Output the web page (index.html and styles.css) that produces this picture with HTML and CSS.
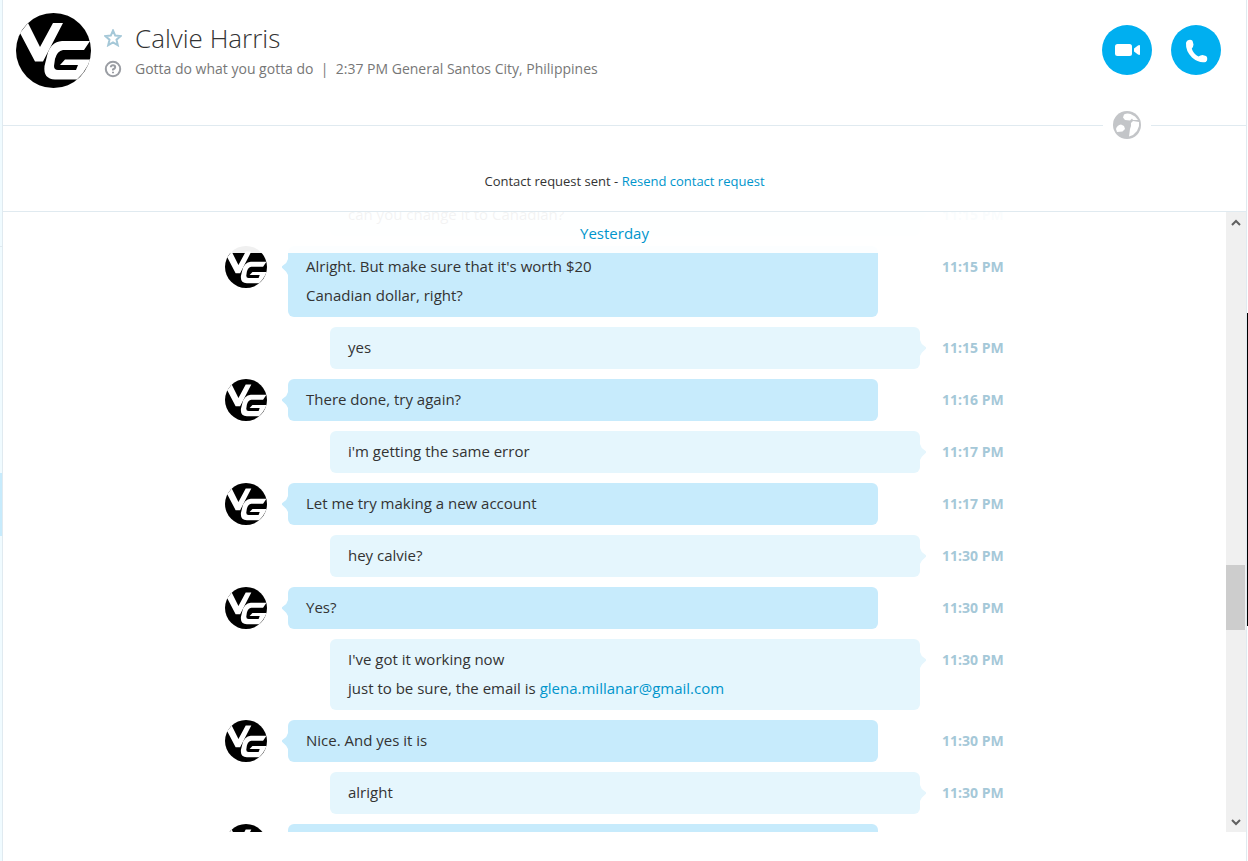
FILE: index.html
```html
<!DOCTYPE html>
<html lang="en">
<head>
  <meta charset="UTF-8">
  <meta name="viewport" content="width=device-width, initial-scale=1.0">
  <title>Calvie Harris</title>
  <link rel="stylesheet" href="styles.css">
</head>
<body>
  <svg class="sprite" aria-hidden="true">
    <symbol id="avatar" viewBox="0 0 75 75">
      <circle cx="37.500" cy="37.500" r="37.500" fill="#000"/>
      <path fill="#fff" d="M4 20 12 10 24 34 37 10H47L27 48.500H19Z"/>
      <path fill="#fff" d="M74 28 68 37H47Q41 38 39 46L38 53Q38 57 42 57H60L62 52H44L49 46.500H74L72 52 67 60 61 66.500H39Q27 66 28.500 53L31 43Q34 29 46 28Z"/>
    </symbol>
  </svg>

  <div class="app">
    <aside class="sidebar-edge">
      <div class="above"></div>
      <div class="selected"></div>
    </aside>

    <main class="conversation">
      <header class="contact">
        <svg class="avatar-large" role="img" aria-label="Calvie Harris"><use href="#avatar"/></svg>
        <div class="contact-info">
          <div class="info-row">
            <svg class="info-icon star" viewBox="0 0 18 18"><path d="M9 1.500 11.200 6.600 16.700 7.100 12.500 10.700 13.800 16.200 9 13.300 4.200 16.200 5.500 10.700 1.300 7.100 6.800 6.600Z"/></svg>
            <h1>Calvie Harris</h1>
          </div>
          <div class="info-row">
            <svg class="info-icon status" viewBox="0 0 18 18"><circle cx="9" cy="9" r="7.200"/><path d="M6.800 7.300Q6.900 5.300 9 5.300T11.200 7.200Q11.200 8.300 9 9.500V10.500M9 11.700V13.200"/></svg>
            <p class="mood">Gotta do what you gotta do &nbsp;|&nbsp; 2:37 PM General Santos City, Philippines</p>
          </div>
        </div>
        <div class="call-buttons">
          <button aria-label="Video call">
            <svg viewBox="0 0 50 50"><rect x="13" y="19" width="17" height="12" rx="2.500"/><path d="M32 23.500 36 20.500Q38 19.500 38 21V29Q38 30.500 36 29.500L32 26.500Z"/></svg>
          </button>
          <button aria-label="Call">
            <svg viewBox="0 0 50 50"><path d="M16.500 15.500Q19.500 14 21.500 15.800L22.500 19.500Q22.500 21.500 20.800 23.500Q22 28.500 27.500 31.500Q29.500 30 31.500 30L35 31Q36.800 32 36 35.500L34.800 37Q28 38.500 21 32.500Q14.500 26 15 18Q15.200 16.500 16.500 15.500Z"/></svg>
          </button>
        </div>
      </header>

      <div class="divider">
        <svg viewBox="0 0 28 28">
          <circle cx="14" cy="14" r="14"/>
          <path d="M11 3.500Q14 2 17.500 3L22 5.500 25 9H20L19 7.500 17 9.500 12 9 10 6.500Z"/>
          <path d="M3 18Q4 14 8 13.500L11 15 12 18 9.500 20.500 4 21Z"/>
          <path d="M18 12 20 10 26 11 26 15 24 20 20 24 16 25.500 17 18 18 15Z"/>
        </svg>
      </div>

      <p class="notice">Contact request sent - <a href="#">Resend contact request</a></p>

      <section class="history">
        <div class="scroll-area">
          <div class="day"><a href="#">Yesterday</a></div>
          <ol class="messages">
            <li class="message sent">
              <p class="bubble">can you change it to Canadian?</p>
              <time>11:15 PM</time>
            </li>
            <li class="message">
              <svg class="avatar"><use href="#avatar"/></svg>
              <p class="bubble">Alright. But make sure that it's worth $20<br>Canadian dollar, right?</p>
              <time>11:15 PM</time>
            </li>
            <li class="message sent">
              <p class="bubble">yes</p>
              <time>11:15 PM</time>
            </li>
            <li class="message">
              <svg class="avatar"><use href="#avatar"/></svg>
              <p class="bubble">There done, try again?</p>
              <time>11:16 PM</time>
            </li>
            <li class="message sent">
              <p class="bubble">i'm getting the same error</p>
              <time>11:17 PM</time>
            </li>
            <li class="message">
              <svg class="avatar"><use href="#avatar"/></svg>
              <p class="bubble">Let me try making a new account</p>
              <time>11:17 PM</time>
            </li>
            <li class="message sent">
              <p class="bubble">hey calvie?</p>
              <time>11:30 PM</time>
            </li>
            <li class="message">
              <svg class="avatar"><use href="#avatar"/></svg>
              <p class="bubble">Yes?</p>
              <time>11:30 PM</time>
            </li>
            <li class="message sent">
              <p class="bubble">I've got it working now<br>just to be sure, the email is <a href="mailto:glena.millanar@gmail.com">glena.millanar@gmail.com</a></p>
              <time>11:30 PM</time>
            </li>
            <li class="message">
              <svg class="avatar"><use href="#avatar"/></svg>
              <p class="bubble">Nice. And yes it is</p>
              <time>11:30 PM</time>
            </li>
            <li class="message sent">
              <p class="bubble">alright</p>
              <time>11:30 PM</time>
            </li>
            <li class="message">
              <svg class="avatar"><use href="#avatar"/></svg>
              <p class="bubble"></p>
            </li>
          </ol>
        </div>
        <div class="scrollbar">
          <button aria-label="Scroll up"><svg viewBox="0 0 10 8"><path d="M1 6 5 2 9 6"/></svg></button>
          <div class="track"><div class="thumb"></div></div>
          <button aria-label="Scroll down"><svg viewBox="0 0 10 8"><path d="M1 2 5 6 9 2"/></svg></button>
        </div>
      </section>
    </main>

    <div class="window-edge"><div class="behind"></div></div>
  </div>
</body>
</html>
```
FILE: styles.css
```css
* {
  box-sizing: border-box;
}

body {
  margin: 0;
  background: #fff;
  color: #333;
  font-family: "Segoe UI", "Open Sans", "Noto Sans", sans-serif;
  font-size: 15px;
}

h1, p, ol {
  margin: 0;
  padding: 0;
}

a {
  color: #0095cc;
  text-decoration: none;
}

button {
  border: none;
  padding: 0;
  cursor: pointer;
}

svg {
  display: block;
}

.sprite {
  display: none;
}

.app {
  display: flex;
  height: 100vh;
}

/* slivers of the neighbouring panes */
.sidebar-edge,
.window-edge {
  display: flex;
  flex-direction: column;
}

.sidebar-edge {
  width: 3px;
  background: #f0fbff;
  border-right: 1px solid #e0eaf0;
}

.sidebar-edge::before {
  content: "";
  flex: 246;
  border-bottom: 1px solid #e0eaf0;
}

.above {
  flex: 227;
}

.selected {
  flex: 63;
  background: #c7ebfc;
}

.sidebar-edge::after {
  content: "";
  flex: 325;
}

.window-edge {
  width: 2px;
  border-left: 1px solid #e0eaf0;
}

.window-edge::before {
  content: "";
  flex: 313;
}

.behind {
  flex: 313;
  background: #000;
}

.window-edge::after {
  content: "";
  flex: 235;
}

.conversation {
  flex: 1;
  min-width: 0;
  display: flex;
  flex-direction: column;
  padding-bottom: 29px;
}

.contact {
  display: flex;
  padding: 13px 25px 23px 13px;
}

.avatar-large {
  width: 75px;
  height: 75px;
}

.contact-info {
  flex: 1;
  padding-left: 13px;
}

.info-row {
  display: flex;
  align-items: center;
  gap: 13px;
}

.info-icon {
  width: 18px;
  height: 18px;
  fill: none;
  stroke-width: 2;
}

.star {
  stroke: #a5c8d8;
}

.status {
  stroke: #9a9da3;
}

h1 {
  font-size: 26px;
  font-weight: 300;
  line-height: 50px;
}

.info-row + .info-row {
  margin-top: -6px;
}

.mood {
  color: #777;
  font-size: 14px;
  line-height: 24px;
}

.call-buttons {
  display: flex;
  gap: 19px;
  padding-top: 12px;
}

.call-buttons button {
  width: 50px;
  height: 50px;
  border-radius: 50%;
  background: #00aff0;
}

.call-buttons svg {
  width: 50px;
  height: 50px;
  fill: #fff;
}

.divider {
  display: flex;
  gap: 10px;
}

.divider::before,
.divider::after {
  content: "";
  height: 14px;
  border-bottom: 1px solid #e0eaf0;
}

.divider::before {
  flex: 1;
}

.divider::after {
  width: 95px;
}

.divider svg {
  width: 28px;
  height: 28px;
  fill: #fff;
}

.divider circle {
  fill: #c3c5c8;
}

.notice {
  padding: 32px 0 20px;
  border-bottom: 1px solid #e0eaf0;
  font-size: 13px;
  line-height: 20px;
  text-align: center;
}

.history {
  flex: 1;
  min-height: 0;
  display: flex;
}

.scroll-area {
  position: relative;
  flex: 1;
  overflow: hidden;
}

.day {
  position: absolute;
  top: 0;
  left: 0;
  right: 0;
  height: 41px;
  line-height: 43px;
  background: rgba(255, 255, 255, 0.94);
  text-align: center;
  z-index: 1;
}

.messages {
  display: flex;
  flex-direction: column;
  gap: 10px;
  max-width: 779px;
  margin: -18px auto 0;
  list-style: none;
}

.message {
  display: grid;
  grid-template-columns: 42px 1fr 63px;
  gap: 21px;
}

.avatar {
  width: 42px;
  height: 42px;
}

.bubble {
  position: relative;
  grid-column: 2;
  min-height: 42px;
  margin-right: 42px;
  padding: 6px 18px 7px;
  border-radius: 6px;
  background: #c7ebfc;
  line-height: 29px;
}

.bubble::before {
  content: "";
  position: absolute;
  top: 13px;
  left: -6px;
  width: 6px;
  height: 16px;
  background: inherit;
  clip-path: polygon(100% 0, 70% 25%, 0 45%, 0 55%, 70% 80%, 100% 100%);
}

.sent .bubble {
  margin-right: 0;
  margin-left: 42px;
  background: #e5f6fd;
}

.sent .bubble::before {
  left: 100%;
  clip-path: polygon(0 0, 30% 25%, 100% 45%, 100% 55%, 30% 80%, 0 100%);
}

time {
  padding-left: 1px;
  color: #a5c8d8;
  font-size: 14px;
  font-weight: 700;
  line-height: 42px;
  white-space: nowrap;
}

.scrollbar {
  display: flex;
  flex-direction: column;
  width: 20px;
  background: #f0f0f0;
}

.scrollbar button {
  display: flex;
  align-items: center;
  justify-content: center;
  height: 21px;
  background: none;
}

.scrollbar svg {
  width: 10px;
  height: 8px;
  fill: none;
  stroke: #606060;
  stroke-width: 2;
}

.track {
  flex: 1;
  display: flex;
  flex-direction: column;
}

.track::before {
  content: "";
  flex: 332;
}

.thumb {
  flex: 65;
  margin-right: 1px;
  background: #cdcdcd;
}

.track::after {
  content: "";
  flex: 181;
}
```
